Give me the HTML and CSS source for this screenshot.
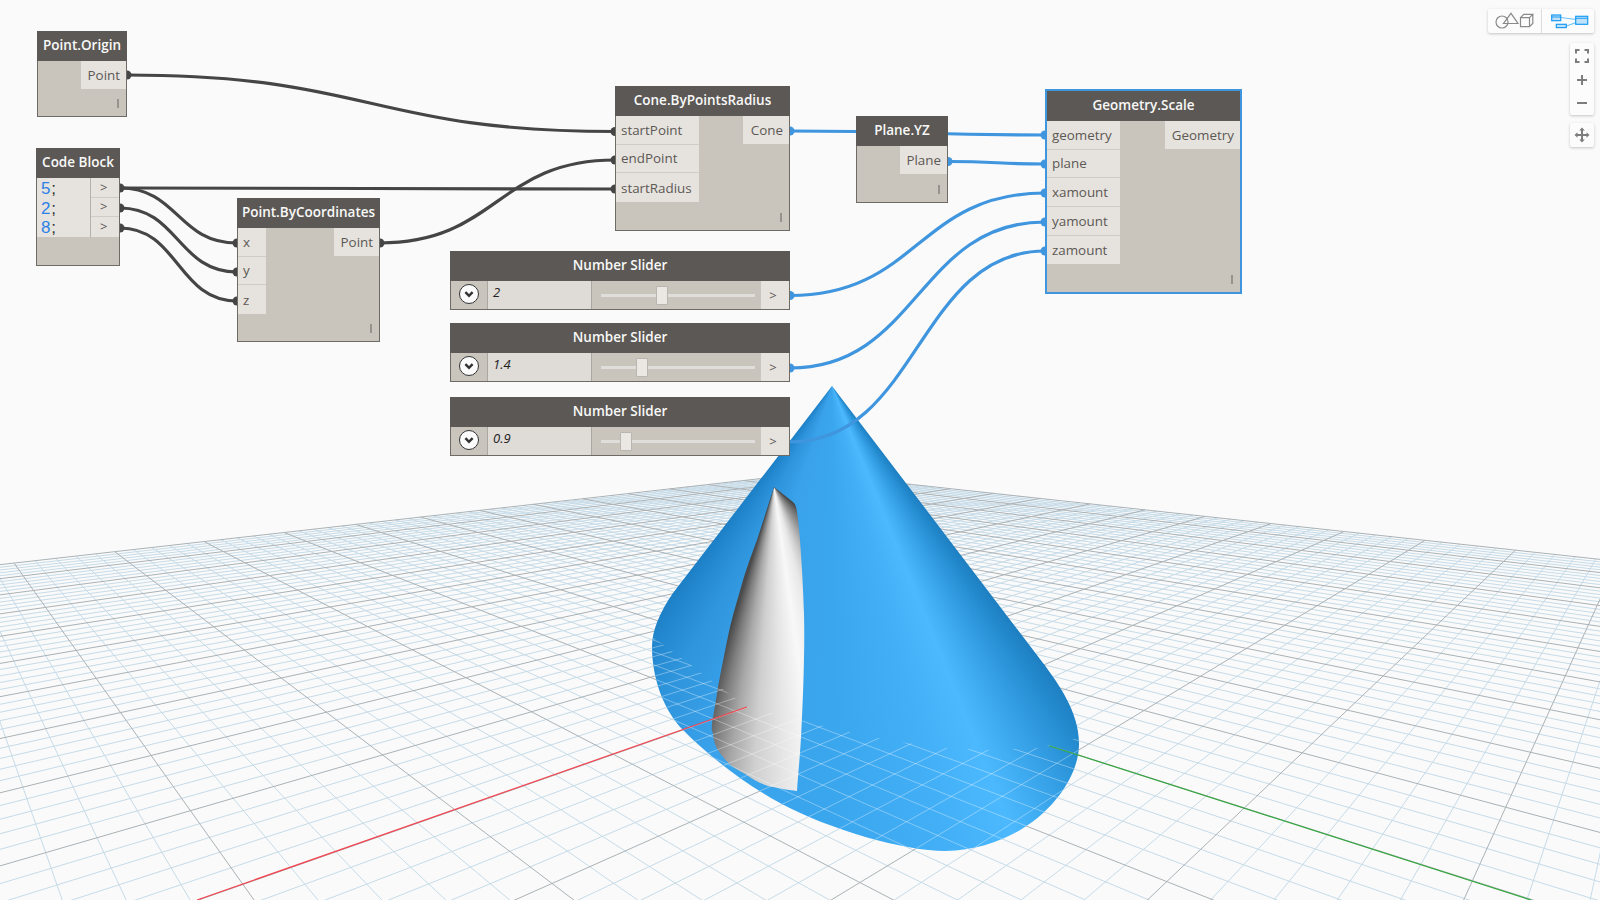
FILE: index.html
```html
<!doctype html>
<html>
    <head>
        <meta charset=utf-8>
        <title>Geometry.Scale graph</title>
        <link rel="stylesheet" href="styles.css">
    </head>
    <body>
        <div class="canvas">

            <!-- background 3d view -->
            <svg class="layer" width="1600" height="900">
                <path class="grid-minor"/>
                <path class="grid-major"/>
            </svg>
            <div class="cone"></div>
            <div class="inner"></div>
            <svg class="layer" width="1600" height="900">
                <defs>
                    <clipPath id="base-clip">
                        <path d="M653,637 L747,707 L793,718 L820,725 L850,732 L878,738 L907,743 L947,748 L987,750 L1037,748 L1079,738 L1079,743 C1080,785 1030,849 945,851 C905,851 830,830 780,803 C745,784 710,757 683,730 C665,712 652,680 652,647 Z"/>
                    </clipPath>
                </defs>
                <g clip-path="url(#base-clip)" class="over-grid">
                    <path class="grid-minor"/>
                    <path class="grid-major"/>
                </g>
                <line class="axis-x" x1="197" y1="900" x2="747" y2="707"/>
                <line class="axis-y" x1="1049" y1="745.700" x2="1531" y2="900"/>
            </svg>

            <!-- wires -->
            <svg class="layer" width="1600" height="900">
                <g class="wires-dark">
                    <path d="M127,75 C371,75 371,131.500 615,131.500"/>
                    <path d="M120,188 C367,188 367,189 615,189"/>
                    <path d="M120,188 C178,188 178,243 237,243"/>
                    <path d="M120,208 C178,208 178,272 237,272"/>
                    <path d="M120,228 C178,228 178,301 237,301"/>
                    <path d="M380,243 C497,243 497,160 615,160"/>
                </g>
                <g class="ports-dark">
                    <circle cx="127" cy="75" r="4.500"/>
                    <circle cx="120" cy="188" r="4.500"/>
                    <circle cx="120" cy="208" r="4.500"/>
                    <circle cx="120" cy="228" r="4.500"/>
                    <circle cx="237" cy="243" r="4.500"/>
                    <circle cx="237" cy="272" r="4.500"/>
                    <circle cx="237" cy="301" r="4.500"/>
                    <circle cx="380" cy="243" r="4.500"/>
                    <circle cx="615" cy="131.500" r="4.500"/>
                    <circle cx="615" cy="160" r="4.500"/>
                    <circle cx="615" cy="189" r="4.500"/>
                </g>
                <g class="wires-blue">
                    <path d="M790,131 C918,131 918,135 1045,135"/>
                    <path d="M948,161.500 C997,161.500 997,164 1045,164"/>
                    <path d="M790,295.500 C918,295.500 918,193 1045,193"/>
                    <path d="M790,368 C918,368 918,222 1045,222"/>
                    <path d="M790,442 C918,442 918,251 1045,251"/>
                </g>
                <g class="ports-blue">
                    <circle cx="790" cy="131" r="4.500"/>
                    <circle cx="948" cy="161.500" r="4.500"/>
                    <circle cx="790" cy="295.500" r="4.500"/>
                    <circle cx="790" cy="368" r="4.500"/>
                    <circle cx="1045" cy="135" r="4.500"/>
                    <circle cx="1045" cy="164" r="4.500"/>
                    <circle cx="1045" cy="193" r="4.500"/>
                    <circle cx="1045" cy="222" r="4.500"/>
                    <circle cx="1045" cy="251" r="4.500"/>
                </g>
            </svg>

            <!-- nodes -->
            <div class="node n-origin">
                <div class="node-head">Point.Origin</div>
                <div class="node-body">
                    <div class="inputs"></div>
                    <div class="outputs"><div class="port">Point</div></div>
                    <span class="lace"></span>
                </div>
            </div>

            <div class="node n-code">
                <div class="node-head">Code Block</div>
                <div class="node-body">
                    <div class="code">
                        <div><span class="num">5</span>;</div>
                        <div><span class="num">2</span>;</div>
                        <div><span class="num">8</span>;</div>
                    </div>
                    <div class="code-outs">
                        <div class="code-out">&gt;</div>
                        <div class="code-out">&gt;</div>
                        <div class="code-out">&gt;</div>
                    </div>
                </div>
            </div>

            <div class="node n-coords">
                <div class="node-head">Point.ByCoordinates</div>
                <div class="node-body">
                    <div class="inputs">
                        <div class="port">x</div>
                        <div class="port">y</div>
                        <div class="port">z</div>
                    </div>
                    <div class="outputs"><div class="port">Point</div></div>
                    <span class="lace"></span>
                </div>
            </div>

            <div class="node n-cone">
                <div class="node-head">Cone.ByPointsRadius</div>
                <div class="node-body">
                    <div class="inputs">
                        <div class="port">startPoint</div>
                        <div class="port">endPoint</div>
                        <div class="port">startRadius</div>
                    </div>
                    <div class="outputs"><div class="port">Cone</div></div>
                    <span class="lace"></span>
                </div>
            </div>

            <div class="node n-plane">
                <div class="node-head">Plane.YZ</div>
                <div class="node-body">
                    <div class="inputs"></div>
                    <div class="outputs"><div class="port">Plane</div></div>
                    <span class="lace"></span>
                </div>
            </div>

            <div class="node n-scale">
                <div class="node-head">Geometry.Scale</div>
                <div class="node-body">
                    <div class="inputs">
                        <div class="port">geometry</div>
                        <div class="port">plane</div>
                        <div class="port">xamount</div>
                        <div class="port">yamount</div>
                        <div class="port">zamount</div>
                    </div>
                    <div class="outputs"><div class="port">Geometry</div></div>
                    <span class="lace"></span>
                </div>
            </div>

            <div class="node slider s-1">
                <div class="node-head">Number Slider</div>
                <div class="slider-row">
                    <div class="expand"><svg width="20" height="20" viewBox="0 0 20 20"><path d="M6,8 L10,12 L14,8"/></svg></div>
                    <div class="value">2</div>
                    <div class="track-wrap"><div class="track"></div><div class="thumb" style="left:37.600%"></div></div>
                    <div class="slider-out">&gt;</div>
                </div>
            </div>

            <div class="node slider s-2">
                <div class="node-head">Number Slider</div>
                <div class="slider-row">
                    <div class="expand"><svg width="20" height="20" viewBox="0 0 20 20"><path d="M6,8 L10,12 L14,8"/></svg></div>
                    <div class="value">1.4</div>
                    <div class="track-wrap"><div class="track"></div><div class="thumb" style="left:26.300%"></div></div>
                    <div class="slider-out">&gt;</div>
                </div>
            </div>

            <div class="node slider s-3">
                <div class="node-head">Number Slider</div>
                <div class="slider-row">
                    <div class="expand"><svg width="20" height="20" viewBox="0 0 20 20"><path d="M6,8 L10,12 L14,8"/></svg></div>
                    <div class="value">0.9</div>
                    <div class="track-wrap"><div class="track"></div><div class="thumb" style="left:16.500%"></div></div>
                    <div class="slider-out">&gt;</div>
                </div>
            </div>

            <!-- view controls -->
            <div class="controls">
                <div class="toggle">
                    <div class="toggle-btn t-geo">
                        <svg width="52" height="24" viewBox="0 0 52 24">
                            <g class="ico-gray">
                                <circle cx="13" cy="13" r="6"/>
                                <path d="M22,4.300 L29,14.500 L14.500,14.500 Z"/>
                                <path d="M31.500,8.700 h9 v9 h-9 Z M31.500,8.700 l3.300,-3.300 h9 l-3.300,3.300 M40.500,17.700 l3.300,-3.300 v-9"/>
                            </g>
                        </svg>
                    </div>
                    <div class="toggle-btn t-graph">
                        <svg width="52" height="24" viewBox="0 0 52 24">
                            <path class="ico-link" d="M19,8.500 L34,10.500 M24.500,17 L34,13.500"/>
                            <g class="ico-blue">
                                <rect x="9.700" y="6" width="9" height="5.700"/>
                                <rect x="33.700" y="7.300" width="12" height="8"/>
                                <rect x="14.300" y="15.300" width="10" height="3.300"/>
                            </g>
                            <path class="ico-bar" d="M9.700,8 h9 M33.700,9.300 h12"/>
                        </svg>
                    </div>
                </div>
                <div class="zoom-box">
                    <div class="zoom-btn">
                        <svg width="14" height="14" viewBox="0 0 14 14"><path class="ico-solid" d="M1,4.500 V1 H4.500 M9.500,1 H13 V4.500 M13,9.500 V13 H9.500 M4.500,13 H1 V9.500"/></svg>
                    </div>
                    <div class="zoom-btn">
                        <svg width="14" height="14" viewBox="0 0 14 14"><path class="ico-solid" d="M2,7 H12 M7,2 V12"/></svg>
                    </div>
                    <div class="zoom-btn">
                        <svg width="14" height="14" viewBox="0 0 14 14"><path class="ico-solid" d="M2,7 H12"/></svg>
                    </div>
                </div>
                <div class="pan-box">
                    <svg width="16" height="16" viewBox="0 0 16 16">
                        <path class="ico-solid" d="M3,8 H13 M8,3 V13"/>
                        <path class="ico-fill" d="M8,0.500 L10.800,3.500 H5.200 Z M8,15.500 L10.800,12.500 H5.200 Z M0.500,8 L3.500,5.200 V10.800 Z M15.500,8 L12.500,5.200 V10.800 Z"/>
                    </svg>
                </div>
            </div>
        </div>
        <script src="grid.js"></script>
    </body>
</html>
```

FILE: styles.css
```css
:root {
  --bg: #fafafa;
  --head: #5c5855;
  --body: #c9c5bd;
  --border: #6e6b66;
  --port: #e6e3de;
  --text: #5c5855;
  --blue: #3f95de;
  --dark: #454545;
}

* {
  padding: 0;
  margin: 0;
  box-sizing: border-box;
}

body {
  background: var(--bg);
  font: 13.400px/1.2 "Open Sans", sans-serif;
  color: var(--text);
  overflow: hidden;
}

.canvas {
  position: relative;
  width: 1600px;
  height: 900px;
  overflow: hidden;
}

.layer {
  position: absolute;
  left: 0;
  top: 0;
}

/* 3d view */
.grid-minor,
.grid-major {
  fill: none;
  stroke-width: 1;
}

.grid-minor {
  stroke: #c6dbe8;
}

.grid-major {
  stroke: #aab2b6;
}

.over-grid .grid-minor,
.over-grid .grid-major {
  stroke: #fff;
  stroke-opacity: 0.35;
}

.axis-x {
  stroke: #f4444f;
  stroke-width: 1.200;
}

.axis-y {
  stroke: #35a53f;
  stroke-width: 1.200;
}

.cone {
  position: absolute;
  inset: 0;
  background: conic-gradient(at 832px 386px,
    #1874b4 140deg, #2288cc 145deg, #35a0e6 151deg, #4cb9ff 158deg,
    #43aff6 166deg, #3aa6ed 180deg, #39a2ea 198deg, #2f95dd 208deg,
    #2388cf 214deg, #1a7cc3 219deg);
  clip-path: path("M832,386 L1043,663 C1058,683 1079,712 1079,743 C1080,785 1030,849 945,851 C905,851 830,830 780,803 C745,784 710,757 683,730 C665,712 652,680 652,647 C652,630 660,612 673,593 Z");
}

.inner {
  position: absolute;
  inset: 0;
  background: conic-gradient(at 774px 487px,
    #444 130deg, #999 150deg, #d0d0d0 160deg, #e8e8e8 165deg, #f8f8f8 172deg,
    #e6e6e6 178deg, #cfcfcf 184deg, #a8a8a8 189deg, #7d7d7d 193deg, #4a4a4a 197deg);
  clip-path: path("M774,487 L793,502 C796,505 796.500,508 797,512 C800,530 803,580 804,613 C805,650 803,700 801,737 C800,757 798,775 797,791 C790,790 782,789 773,787 C762,785 754,780 747,775 C737,770 729,765 723,757 C717,750 713,742 713,733 C711,730 712,727 712,723 C714,712 716,700 718,687 C722,666 726,645 730,627 C734,610 739,595 743,580 C747,567 752,553 757,540 Z");
}

/* wires */
.wires-dark path,
.wires-blue path {
  fill: none;
  stroke-width: 3.200;
}

.wires-dark path {
  stroke: var(--dark);
}

.wires-blue path {
  stroke: var(--blue);
}

.ports-dark {
  fill: var(--dark);
}

.ports-blue {
  fill: var(--blue);
}

/* nodes */
.node {
  position: absolute;
  display: flex;
  flex-direction: column;
  background: var(--body);
  border: 1px solid var(--border);
}

.node-head {
  flex: none;
  height: 30px;
  margin: -1px -1px 0;
  padding-bottom: 2px;
  display: flex;
  align-items: center;
  justify-content: center;
  background: var(--head);
  color: #f8f8f8;
  font-weight: 600;
  font-size: 13.500px;
  white-space: nowrap;
}

.node-body {
  position: relative;
  flex: 1;
  display: flex;
  justify-content: space-between;
  align-items: flex-start;
}

.port {
  height: 28.700px;
  display: flex;
  align-items: center;
  padding: 0 6px 0 5px;
  background: var(--port);
  border-bottom: 1px solid #cfccc6;
}

.port:last-child {
  border-bottom: 0;
}

.outputs .port {
  justify-content: flex-end;
  height: 27.500px;
}

.lace {
  position: absolute;
  right: 7px;
  bottom: 8px;
  width: 2px;
  height: 9px;
  background: #96938d;
}

.n-origin { left: 37px; top: 31px; width: 90px; height: 86px; }
.n-origin .outputs { width: 45px; }

.n-code { left: 36px; top: 148px; width: 84px; height: 118px; }

.n-coords { left: 237px; top: 198px; width: 143px; height: 144px; }
.n-coords .inputs { width: 28px; }
.n-coords .outputs { width: 45px; }

.n-cone { left: 615px; top: 86px; width: 175px; height: 145px; }
.n-cone .inputs { width: 83px; }
.n-cone .outputs { width: 46px; }

.n-plane { left: 856px; top: 116px; width: 92px; height: 87px; }
.n-plane .outputs { width: 47px; }

.n-scale { left: 1045px; top: 89px; width: 197px; height: 205px; border: 2px solid var(--blue); }
.n-scale .node-head { margin: 0; }
.n-scale .inputs { width: 73px; }
.n-scale .outputs { width: 75px; }

/* code block */
.code {
  width: 54px;
  height: 59px;
  padding: 1px 4px 0;
  background: var(--port);
  font: 17px/19.600px "Liberation Sans", sans-serif;
  letter-spacing: 0.700px;
  color: #333;
}

.num {
  color: #2c80e6;
}

.code-outs {
  width: 29px;
  border-left: 1px solid #b5b2ac;
}

.code-out {
  height: 19.600px;
  display: flex;
  align-items: center;
  justify-content: center;
  padding-right: 3px;
  background: var(--port);
  border-bottom: 1px solid #cfccc6;
  font-size: 13px;
  line-height: 1;
}

.code-out:last-child {
  border-bottom: 0;
}

/* sliders */
.slider {
  left: 450px;
  width: 340px;
  height: 59px;
}

.s-1 { top: 251px; }
.s-2 { top: 323px; }
.s-3 { top: 397px; }

.slider-row {
  flex: 1;
  display: flex;
  align-items: stretch;
}

.expand {
  width: 36px;
  display: flex;
  align-items: center;
  justify-content: center;
  padding: 0 1px 2px 0;
}

.expand svg {
  background: #fbfbfb;
  border: 1.500px solid #333;
  border-radius: 50%;
}

.expand path {
  fill: none;
  stroke: #333;
  stroke-width: 2.800;
}

.value {
  width: 105px;
  padding: 4px 5px 0;
  background: #dfdbd6;
  border-left: 1px solid #aaa7a2;
  border-right: 1px solid #aaa7a2;
  color: #222;
  font-size: 13px;
  font-style: italic;
}

.track-wrap {
  position: relative;
  flex: 1;
  display: flex;
  align-items: center;
  padding: 0 6px 0 9px;
}

.track {
  flex: 1;
  height: 3px;
  background: #e0deda;
}

.thumb {
  position: absolute;
  top: 5px;
  width: 12px;
  height: 19px;
  background: #ebe8e4;
  border: 1px solid #b9b6b1;
  border-radius: 1px;
}

.slider-out {
  width: 28px;
  display: flex;
  align-items: center;
  justify-content: center;
  padding: 2px 4px 0 0;
  background: var(--port);
  font-size: 13px;
}

/* controls */
.controls {
  position: absolute;
  top: 9px;
  right: 6px;
  display: flex;
  flex-direction: column;
  align-items: flex-end;
  gap: 8px;
}

.toggle,
.zoom-box,
.pan-box {
  background: #fcfcfc;
  border-radius: 2px;
  box-shadow: 0 1px 3px rgba(0, 0, 0, 0.22);
}

.toggle {
  display: flex;
  height: 24px;
  margin-bottom: 2px;
}

.t-geo {
  width: 54px;
  padding-left: 1px;
  border-right: 1px solid #ddd;
}

.toggle-btn svg {
  display: block;
}

.ico-gray {
  fill: none;
  stroke: #8a8a8a;
  stroke-width: 1.200;
}

.ico-link {
  fill: none;
  stroke: #6cc1f6;
  stroke-width: 1.200;
}

.ico-blue {
  fill: #bde2fa;
  stroke: #1b9bf2;
  stroke-width: 1.200;
}

.ico-bar {
  fill: none;
  stroke: #1b9bf2;
  stroke-width: 1;
}

.zoom-box {
  width: 24px;
  height: 72px;
  padding-top: 1px;
  display: flex;
  flex-direction: column;
}

.zoom-btn {
  flex: 1;
  display: flex;
  align-items: center;
  justify-content: center;
}

.ico-solid {
  fill: none;
  stroke: #7d7d7d;
  stroke-width: 2;
}

.ico-fill {
  fill: #7d7d7d;
}

.pan-box {
  width: 24px;
  height: 24px;
  display: flex;
  align-items: center;
  justify-content: center;
}
```

FILE: grid.js
```js
// ground grid of the 3d view, drawn from the two vanishing points
const origin = [834, 677];
const vpX = [1703, 372];
const vpY = [-122, 372];
const scaleX = 0.1012 / 5;
const scaleY = 0.1001 / 5;
const size = 50;
const near = 0.04;

function project(u, v) {
    const s = u * scaleX;
    const t = v * scaleY;
    const w = 1 + s + t;
    const x = (origin[0] + s * vpX[0] + t * vpY[0]) / w;
    const y = (origin[1] + s * vpX[1] + t * vpY[1]) / w;
    return x.toFixed(1) + ',' + y.toFixed(1);
}

// keep only the part of a line that is in front of the camera
function lineU(u) {
    const minV = Math.max(-size, (near - 1 - u * scaleX) / scaleY);
    if (minV >= size) return '';
    return 'M' + project(u, minV) + ' L' + project(u, size) + ' ';
}

function lineV(v) {
    const minU = Math.max(-size, (near - 1 - v * scaleY) / scaleX);
    if (minU >= size) return '';
    return 'M' + project(minU, v) + ' L' + project(size, v) + ' ';
}

let minor = '';
let major = '';
for (let i = -size; i <= size; i++) {
    const d = lineU(i) + lineV(i);
    if (i % 5 == 0) major += d;
    else minor += d;
}

document.querySelectorAll('.grid-minor').forEach(p => p.setAttribute('d', minor));
document.querySelectorAll('.grid-major').forEach(p => p.setAttribute('d', major));
```
